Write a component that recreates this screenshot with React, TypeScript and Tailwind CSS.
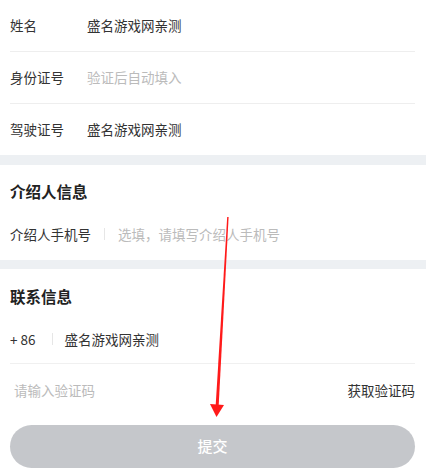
import React from "react";

const font = { fontFamily: '"Noto Sans CJK SC", "Noto Sans", sans-serif' };

function Row({ label, value, placeholder, border }: { label: string; value?: string; placeholder?: string; border?: boolean }) {
  return (
    <div className={`flex h-[52px] items-center ${border ? "border-b border-[#eeeeee]" : ""}`}>
      <div className="w-[77px] text-[13.5px] text-[#333333]">{label}</div>
      {value ? (
        <div className="text-[13.5px] text-[#333333]">{value}</div>
      ) : (
        <div className="text-[13.5px] text-[#bbbbbb]">{placeholder}</div>
      )}
    </div>
  );
}

export default function App() {
  return (
    <div className="relative w-[426px] h-[474px] overflow-hidden bg-white" style={font}>
      <div className="px-[10px] mr-[1px]">
        <Row label="姓名" value="盛名游戏网亲测" border />
        <Row label="身份证号" placeholder="验证后自动填入" border />
        <div className="flex h-[51px] items-center">
          <div className="w-[77px] text-[13.5px] text-[#333333]">驾驶证号</div>
          <div className="text-[13.5px] text-[#333333]">盛名游戏网亲测</div>
        </div>
      </div>
      <div className="h-[10px] bg-[#edf0f3]" />
      <div className="px-[10px] mr-[1px]">
        <div className="flex h-[54px] items-center text-[15.5px] font-bold text-[#222222]">介绍人信息</div>
        <div className="flex h-[30px] items-center">
          <span className="text-[13.5px] text-[#333333]">介绍人手机号</span>
          <span className="mx-[13px] h-[12px] w-px bg-[#e6e6e6]" />
          <span className="text-[13.5px] text-[#bbbbbb]">选填，请填写介绍人手机号</span>
        </div>
        <div className="h-[11px]" />
      </div>
      <div className="h-[9px] bg-[#edf0f3]" />
      <div className="px-[10px] mr-[1px]">
        <div className="flex h-[55px] items-center text-[15.5px] font-bold text-[#222222]">联系信息</div>
        <div className="flex h-[40px] items-start border-b border-[#f0f0f0]">
          <div className="flex h-[30px] items-center">
            <span className="text-[13.5px] text-[#333333]">+ 86</span>
            <span className="ml-[16px] mr-[12px] h-[12px] w-px bg-[#e6e6e6]" />
            <span className="text-[13.5px] text-[#333333]">盛名游戏网亲测</span>
          </div>
        </div>
        <div className="flex h-[52px] items-center justify-between">
          <span className="pl-[4px] text-[13.5px] text-[#bbbbbb]">请输入验证码</span>
          <span className="text-[13.5px] text-[#333333]">获取验证码</span>
        </div>
        <div className="mt-[9px] flex h-[43px] items-center justify-center rounded-full bg-[#c5c7cb] text-[15px] font-medium text-white">
          提交
        </div>
      </div>
      <svg className="absolute left-0 top-0 pointer-events-none" width="426" height="474" viewBox="0 0 426 474">
        <polygon points="227.2,217 228.6,217 218.6,407 215.6,407" fill="#ff1a1a" />
        <polygon points="210,404 224,405 216.5,417" fill="#ff1a1a" />
      </svg>
    </div>
  );
}
